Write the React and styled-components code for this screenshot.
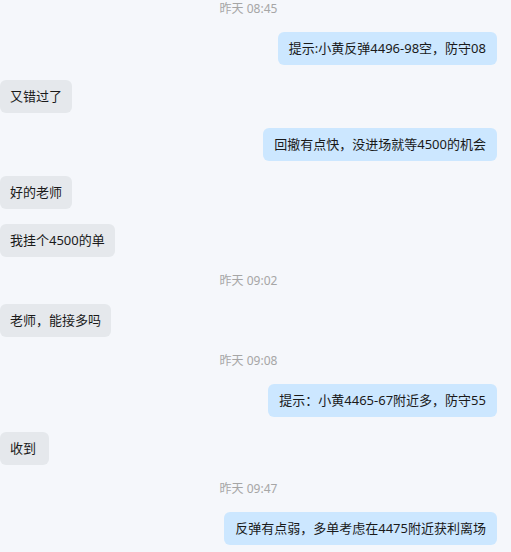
import React from "react";
import styled, { createGlobalStyle } from "styled-components";

const Global = createGlobalStyle`
  html, body { margin: 0; padding: 0; background: #f5f7fb; }
  body { font-family: "Noto Sans", "Noto Sans CJK SC", sans-serif; }
`;

const Chat = styled.div`
  display: flex;
  flex-direction: column;
  gap: 15px;
  padding: 0 14px 0 0;
  background: #f5f7fb;
  min-height: 552px;
  box-sizing: border-box;
`;

const Time = styled.div`
  text-align: center;
  font-size: 12px;
  line-height: 17px;
  color: #a6a6a6;
`;

const Row = styled.div`
  display: flex;
  justify-content: ${(p) => (p.$mine ? "flex-end" : "flex-start")};
`;

const Bubble = styled.div`
  padding: 7px ${(p) => (p.$mine ? "11px" : "10px")} 7px
    ${(p) => (p.$mine ? "11px" : "10px")};
  font-size: 13px;
  line-height: 19px;
  color: #1a1a1a;
  border-radius: 6px;
  background: ${(p) => (p.$mine ? "#cce7ff" : "#e5e8ec")};
  white-space: pre;
`;

const items = [
  { t: "昨天 08:45" },
  { m: true, text: "提示:小黄反弹4496-98空，防守08" },
  { text: "又错过了" },
  { m: true, text: "回撤有点快，没进场就等4500的机会" },
  { text: "好的老师" },
  { text: "我挂个4500的单" },
  { t: "昨天 09:02" },
  { text: "老师，能接多吗" },
  { t: "昨天 09:08" },
  { m: true, text: "提示：小黄4465-67附近多，防守55" },
  { text: "收到 " },
  { t: "昨天 09:47" },
  { m: true, text: "反弹有点弱，多单考虑在4475附近获利离场" },
];

export default function App() {
  return (
    <>
      <Global />
      <Chat>
        {items.map((it, i) =>
          it.t ? (
            <Time key={i}>{it.t}</Time>
          ) : (
            <Row key={i} $mine={it.m}>
              <Bubble $mine={it.m}>{it.text}</Bubble>
            </Row>
          )
        )}
      </Chat>
    </>
  );
}
